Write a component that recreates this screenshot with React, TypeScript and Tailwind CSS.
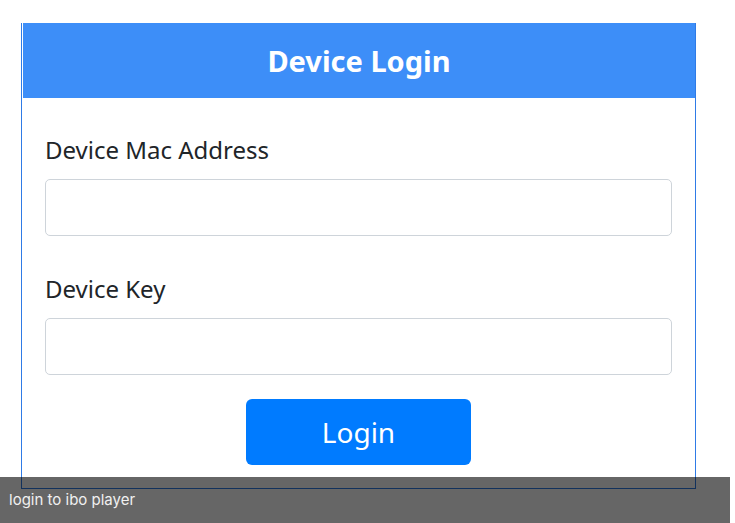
export default function App() {
  return (
    <div className="relative h-[523px] w-[735px] overflow-hidden bg-white font-['Noto_Sans',sans-serif]">
      <div className="ml-[21px] mt-[23px] flex w-[675px] flex-col border-x border-b border-[#2f7be6]">
        <div className="ml-px flex h-[75px] items-center justify-center bg-[#3d8ef8]">
          <h1 className="pt-px text-[29px] font-bold text-white">Device Login</h1>
        </div>
        <form className="flex flex-col px-[23px] pt-[34px] pb-[23px]" onSubmit={(e) => e.preventDefault()}>
          <label className="mb-[11px] text-[24px] leading-[36px] text-[#212529]">Device Mac Address</label>
          <input
            type="text"
            className="h-[57px] w-full rounded-[5px] border border-[#ced4da] px-3 outline-none"
          />
          <label className="mt-[35px] mb-[11px] text-[24px] leading-[36px] text-[#212529]">Device Key</label>
          <input
            type="text"
            className="h-[57px] w-full rounded-[5px] border border-[#ced4da] px-3 outline-none"
          />
          <div className="mt-[24px] flex justify-center">
            <button
              type="submit"
              className="h-[66px] w-[225px] rounded-[6px] bg-[#007bff] text-[28px] text-white"
            >
              Login
            </button>
          </div>
        </form>
      </div>
      <div className="absolute bottom-0 left-0 flex h-[46px] w-[730px] items-center bg-black/60 px-[9px] font-['Inter',sans-serif] text-[15px] text-[#f0f0f0]">
        login to ibo player
      </div>
    </div>
  );
}
